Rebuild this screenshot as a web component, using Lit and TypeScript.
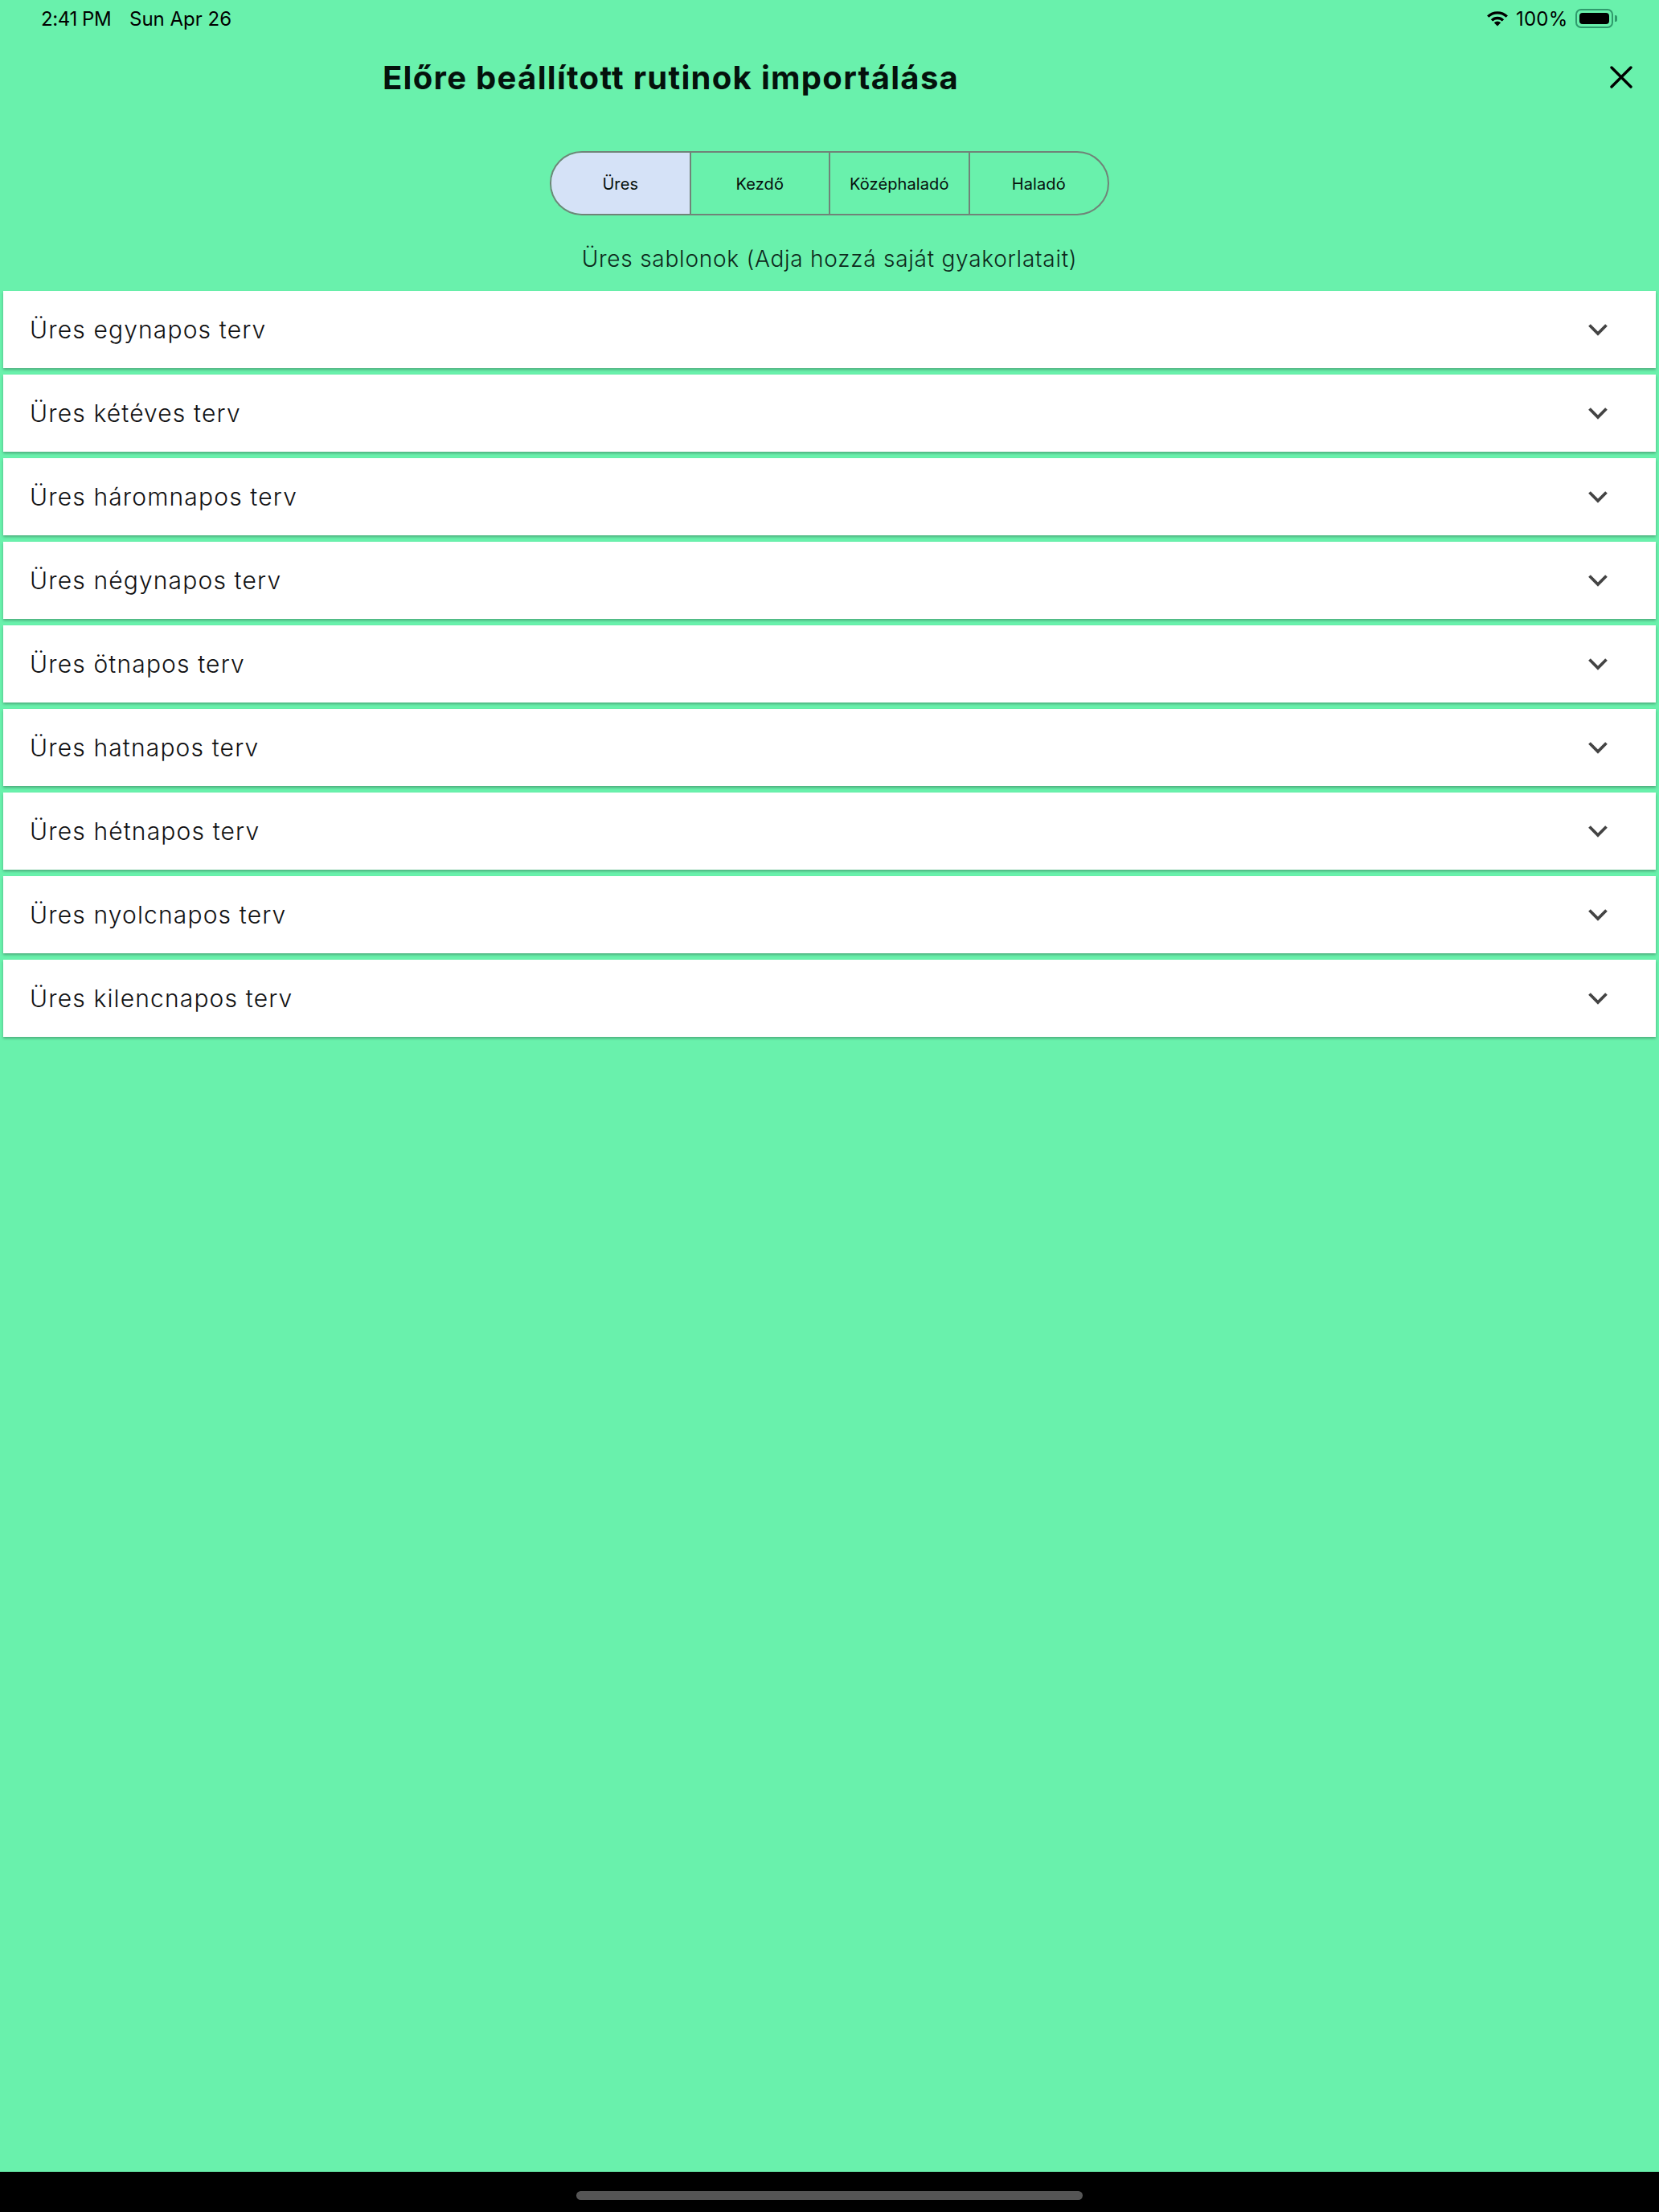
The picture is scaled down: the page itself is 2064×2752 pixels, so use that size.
import {LitElement, css, html} from 'lit';
import {customElement, property} from 'lit/decorators.js';

const PLANS = [
    'Üres egynapos terv',
    'Üres kétéves terv',
    'Üres háromnapos terv',
    'Üres négynapos terv',
    'Üres ötnapos terv',
    'Üres hatnapos terv',
    'Üres hétnapos terv',
    'Üres nyolcnapos terv',
    'Üres kilencnapos terv',
];

const LEVELS = ['Üres', 'Kezdő', 'Középhaladó', 'Haladó'];

@customElement('status-bar')
class StatusBar extends LitElement {
    render() {
        return html`
        <div class="bar">
            <span class="time">2:41 PM</span>
            <span class="date">Sun Apr 26</span>
            <span class="right">
                <svg class="wifi" width="28" height="20" viewBox="0 0 28 20">
                    <path d="M2.200 7.600A17 17 0 0 1 25.800 7.600" fill="none" stroke="#000" stroke-width="3.400"/>
                    <path d="M7 12.400A10 10 0 0 1 21 12.400" fill="none" stroke="#000" stroke-width="3.400"/>
                    <path d="M14 19.500L9.800 15.200A6 6 0 0 1 18.200 15.200Z" fill="#000"/>
                </svg>
                <span class="pct">100%</span>
                <span class="battery"><span class="level"></span></span>
                <span class="tip"></span>
            </span>
        </div>
        `;
    }

    static styles = css`
        :host {
            display: block;
        }

        .bar {
            display: flex;
            align-items: center;
            box-sizing: border-box;
            height: 48px;
            padding: 0 52px 2px 51px;
            font-family: Inter, sans-serif;
            font-size: 24px;
            color: #000;
        }

        .time {
            width: 110px;
            letter-spacing: -0.4px;
        }

        .right {
            margin-left: auto;
            display: flex;
            align-items: center;
        }

        .wifi {
            margin-right: 9px;
        }

        .pct {
            width: 74px;
            letter-spacing: 0.2px;
        }

        .battery {
            box-sizing: border-box;
            width: 47px;
            height: 24px;
            padding: 3px;
            border: 2px solid #2f9a6c;
            border-radius: 7px;
        }

        .level {
            display: block;
            height: 100%;
            background: #000;
            border-radius: 4px;
        }

        .tip {
            width: 3px;
            height: 8px;
            margin-left: 2px;
            background: #2f9a6c;
            border-radius: 0 2px 2px 0;
        }
    `;
}

@customElement('level-tabs')
class LevelTabs extends LitElement {
    @property({type: Array})
    levels: string[] = [];

    @property({type: Number})
    selected = 0;

    render() {
        return html`
        <div class="tabs">
            ${this.levels.map((level, i) => html`
                <div class="tab ${i === this.selected ? 'on' : ''}">${level}</div>
            `)}
        </div>
        `;
    }

    static styles = css`
        :host {
            display: flex;
            justify-content: center;
        }

        .tabs {
            display: flex;
            width: 696px;
            height: 80px;
            box-sizing: border-box;
            border: 2px solid #708378;
            border-radius: 40px;
            overflow: hidden;
        }

        .tab {
            flex: 1;
            display: flex;
            align-items: center;
            justify-content: center;
            padding-top: 1px;
            font-family: Inter, sans-serif;
            font-size: 20px;
            letter-spacing: 0.1px;
            color: #06100c;
            border-right: 2px solid #708378;
        }

        .tab:last-child {
            border-right: 0;
        }

        .on {
            background: #d5e2f7;
        }
    `;
}

@customElement('plan-row')
class PlanRow extends LitElement {
    @property({type: String})
    label = '';

    render() {
        return html`
        <div class="row">
            <span class="label">${this.label}</span>
            <svg class="chevron" width="24" height="16" viewBox="0 0 24 16">
                <path d="M1.500 2.500 L12 13 L22.500 2.500" fill="none" stroke="#444" stroke-width="3.800"/>
            </svg>
        </div>
        `;
    }

    static styles = css`
        :host {
            display: block;
        }

        .row {
            display: flex;
            align-items: center;
            justify-content: space-between;
            height: 96px;
            padding: 0 60px 0 33px;
            background: #fff;
            box-shadow: 0 2px 3px rgba(0, 0, 0, 0.28);
        }

        .label {
            font-family: Inter, sans-serif;
            font-size: 30px;
            font-weight: 300;
            letter-spacing: 1.15px;
            color: #111113;
        }
    `;
}

@customElement('app-root')
class AppRoot extends LitElement {
    render() {
        return html`
        <status-bar></status-bar>
        <header class="head">
            <h1 class="title">Előre beállított rutinok importálása</h1>
            <svg class="close" width="28" height="28" viewBox="0 0 28 28">
                <path d="M2 2 L26 26 M26 2 L2 26" fill="none" stroke="#000" stroke-width="3.400" stroke-linecap="round"/>
            </svg>
        </header>
        <level-tabs .levels=${LEVELS} .selected=${0}></level-tabs>
        <p class="hint">Üres sablonok (Adja hozzá saját gyakorlatait)</p>
        <div class="plans">
            ${PLANS.map((plan) => html`<plan-row .label=${plan}></plan-row>`)}
        </div>
        <div class="spacer"></div>
        <footer class="foot"><span class="home"></span></footer>
        `;
    }

    static styles = css`
        :host {
            display: flex;
            flex-direction: column;
            height: 2752px;
            background: #69f1ac;
        }

        .head {
            display: flex;
            align-items: center;
            justify-content: space-between;
            height: 52px;
            margin: 22px 0 66px;
            padding: 0 33px 0 476px;
        }

        .title {
            margin: 0;
            font-family: Inter, sans-serif;
            font-size: 40px;
            font-weight: 700;
            letter-spacing: 1.3px;
            color: #04120c;
        }

        .hint {
            margin: 27px 0 13px;
            height: 54px;
            line-height: 54px;
            text-align: center;
            font-family: Inter, sans-serif;
            font-size: 28px;
            font-weight: 300;
            letter-spacing: 0.75px;
            color: #0d2a1c;
        }

        .plans {
            display: flex;
            flex-direction: column;
            gap: 8px;
            padding: 0 4px;
        }

        .spacer {
            flex: 1;
        }

        .foot {
            display: flex;
            justify-content: center;
            height: 50px;
            background: #000;
        }

        .home {
            width: 630px;
            height: 11px;
            margin-top: 24px;
            background: #555;
            border-radius: 6px;
        }
    `;
}
